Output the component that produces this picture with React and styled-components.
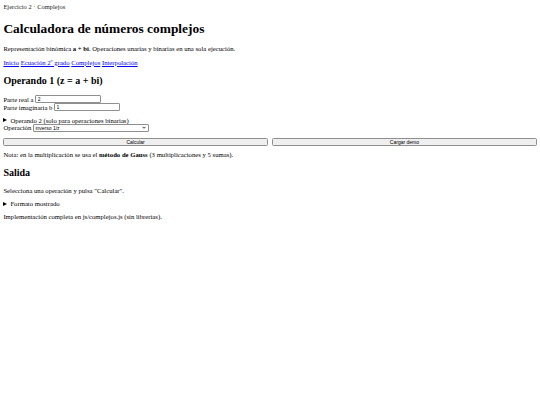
import React from "react";
import styled, { createGlobalStyle } from "styled-components";

const Global = createGlobalStyle`
  html, body { margin: 0; padding: 0; background: #fff; }
  body {
    margin: 3.4px;
    font-family: "Liberation Serif", "Times New Roman", serif;
    font-size: 6.7px;
    line-height: normal;
    color: #000;
  }
`;

const Crumb = styled.header`
  font-size: 6.5px;
  color: #222;
  margin: 0;
`;

const Title = styled.h1`
  font-size: 13.4px;
  font-weight: bold;
  margin: 10.5px 0 8.5px;
`;

const Para = styled.p`
  margin: ${(p) => p.$top ?? 6.5}px 0 0;
`;

const Nav = styled.nav`
  display: flex;
  gap: 1.7px;
  margin-top: 6.3px;
`;

const NavLink = styled.a`
  color: #0000ee;
  text-decoration: underline;
`;

const Heading = styled.h2`
  font-size: 10px;
  font-weight: bold;
  margin: 9.4px 0 0;
`;

const Form = styled.form`
  display: flex;
  flex-direction: column;
  margin-top: 9.2px;
`;

const Field = styled.div`
  display: flex;
  align-items: center;
  gap: 1.7px;
  height: 8px;
`;

const TextInput = styled.input`
  box-sizing: border-box;
  width: 66px;
  height: 8px;
  padding: 0 1.5px;
  border: 1px solid #8f8f8f;
  border-radius: 1px;
  font: 5px "Liberation Sans", Arial, sans-serif;
  color: #000;
`;

const Details = styled.details`
  margin-top: ${(p) => p.$top ?? 5}px;
  summary {
    cursor: pointer;
    list-style: none;
    display: flex;
    align-items: center;
    gap: 3px;
    height: 7.7px;
  }
  summary::-webkit-details-marker { display: none; }
`;

const Arrow = styled.span`
  display: inline-block;
  width: 0;
  height: 0;
  border-top: 2.3px solid transparent;
  border-bottom: 2.3px solid transparent;
  border-left: 4px solid #000;
`;

const SelectWrap = styled.span`
  position: relative;
  display: inline-flex;
`;

const Select = styled.select`
  box-sizing: border-box;
  width: 116px;
  height: 8px;
  padding: 0 0 0 1.5px;
  border: 1px solid #8f8f8f;
  border-radius: 1px;
  font: 5px "Liberation Sans", Arial, sans-serif;
  background: #fff;
  color: #000;
  appearance: none;
  -webkit-appearance: none;
`;

const Chevron = styled.svg`
  position: absolute;
  right: 3px;
  top: 2.5px;
  width: 4px;
  height: 3px;
  pointer-events: none;
`;

const Actions = styled.div`
  display: grid;
  grid-template-columns: 1fr 1fr;
  gap: 4.5px;
  margin-top: 6px;
`;

const Button = styled.button`
  box-sizing: border-box;
  height: 8.5px;
  padding: 0;
  border: 1px solid #8f8f8f;
  border-radius: 1.5px;
  background: #efefef;
  font: 5px "Liberation Sans", Arial, sans-serif;
  color: #000;
`;

export default function App() {
  return (
    <>
      <Global />
      <Crumb>Ejercicio 2 · Complejos</Crumb>
      <Title>Calculadora de números complejos</Title>
      <Para $top={0}>
        Representación binómica <b>a + bi</b>. Operaciones unarias y binarias en una sola ejecución.
      </Para>
      <Nav>
        <NavLink href="#">Inicio</NavLink>
        <NavLink href="#">Ecuación 2º grado</NavLink>
        <NavLink href="#">Complejos</NavLink>
        <NavLink href="#">Interpolación</NavLink>
      </Nav>
      <Heading>Operando 1 (z = a + bi)</Heading>
      <Form onSubmit={(e) => e.preventDefault()}>
        <Field>
          <label>Parte real a</label>
          <TextInput defaultValue="2" />
        </Field>
        <Field>
          <label>Parte imaginaria b</label>
          <TextInput defaultValue="1" />
        </Field>
        <Details>
          <summary><Arrow />Operando 2 (solo para operaciones binarias)</summary>
        </Details>
        <Field>
          <label>Operación</label>
          <SelectWrap>
            <Select defaultValue="inv">
              <option value="inv">inverso 1/z</option>
            </Select>
            <Chevron viewBox="0 0 8 6">
              <path d="M1 1.5 L4 4.5 L7 1.5" fill="none" stroke="#000" strokeWidth="1.6" />
            </Chevron>
          </SelectWrap>
        </Field>
        <Actions>
          <Button type="button">Calcular</Button>
          <Button type="button">Cargar demo</Button>
        </Actions>
      </Form>
      <Para $top={4.5}>
        Nota: en la multiplicación se usa el <b>método de Gauss</b> (3 multiplicaciones y 5 sumas).
      </Para>
      <Heading>Salida</Heading>
      <Para $top={8.4}>Selecciona una operación y pulsa "Calcular".</Para>
      <Details $top={6}>
        <summary><Arrow />Formato mostrado</summary>
      </Details>
      <Para $top={6}>Implementación completa en js/complejos.js (sin librerías).</Para>
    </>
  );
}
